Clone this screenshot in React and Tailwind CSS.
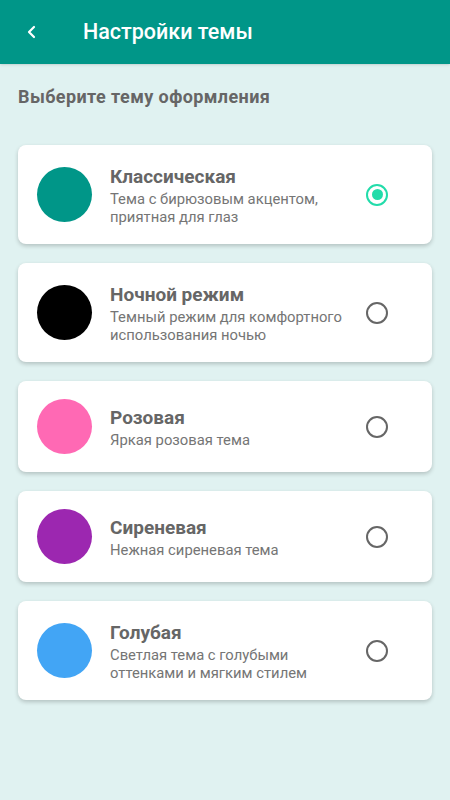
import React, { useState } from 'react';

const themes = [
  { id: 'classic', name: 'Классическая', desc: 'Тема с бирюзовым акцентом, приятная для глаз', color: 'bg-[#009688]' },
  { id: 'night', name: 'Ночной режим', desc: 'Темный режим для комфортного использования ночью', color: 'bg-black' },
  { id: 'pink', name: 'Розовая', desc: 'Яркая розовая тема', color: 'bg-[#ff69b4]' },
  { id: 'lilac', name: 'Сиреневая', desc: 'Нежная сиреневая тема', color: 'bg-[#9c27b0]' },
  { id: 'blue', name: 'Голубая', desc: 'Светлая тема с голубыми оттенками и мягким стилем', color: 'bg-[#42a5f5]' },
];

const Radio = ({ checked }) => (
  <div
    className={`w-[22px] h-[22px] rounded-full border-2 flex items-center justify-center shrink-0 ${
      checked ? 'border-[#22dcaa]' : 'border-[#666666]'
    }`}
  >
    {checked && <div className="w-[11px] h-[11px] rounded-full bg-[#22dcaa]" />}
  </div>
);

export default function App() {
  const [selected, setSelected] = useState('classic');

  return (
    <div className="w-[450px] h-[800px] bg-[#e0f2f1] font-['Roboto',sans-serif] overflow-hidden">
      {/* Header */}
      <div className="h-16 bg-[#009688] flex items-center shadow-sm">
        <button className="w-16 h-16 flex items-center justify-center text-white" aria-label="Назад">
          <svg width="14" height="14" viewBox="0 0 14 14" fill="none">
            <path d="M9 2 L4 7 L9 12" stroke="currentColor" strokeWidth="2.2" strokeLinecap="round" strokeLinejoin="round" />
          </svg>
        </button>
        <h1 className="ml-[19px] text-[21.5px] font-medium text-white">Настройки темы</h1>
      </div>

      <div className="px-[18px]">
        <h2 className="mt-[22px] text-[18px] tracking-[0.4px] font-bold text-[#666666] leading-[22px]">Выберите тему оформления</h2>

        <div className="mt-[37px] flex flex-col gap-[19px]">
          {themes.map((t) => (
            <div
              key={t.id}
              onClick={() => setSelected(t.id)}
              className="bg-white rounded-lg shadow-[0_2px_4px_rgba(0,0,0,0.2)] flex items-center pl-[19px] pr-[44px] py-[18px] cursor-pointer"
            >
              <div className={`w-[55px] h-[55px] rounded-full shrink-0 ${t.color}`} />
              <div className="flex-1 ml-[18px] pr-3">
                <div className="text-[19px] font-bold text-[#666666] leading-[28px]">{t.name}</div>
                <div className="text-[14.8px] text-[#757575] leading-[17.5px]">{t.desc}</div>
              </div>
              <Radio checked={selected === t.id} />
            </div>
          ))}
        </div>
      </div>
    </div>
  );
}
